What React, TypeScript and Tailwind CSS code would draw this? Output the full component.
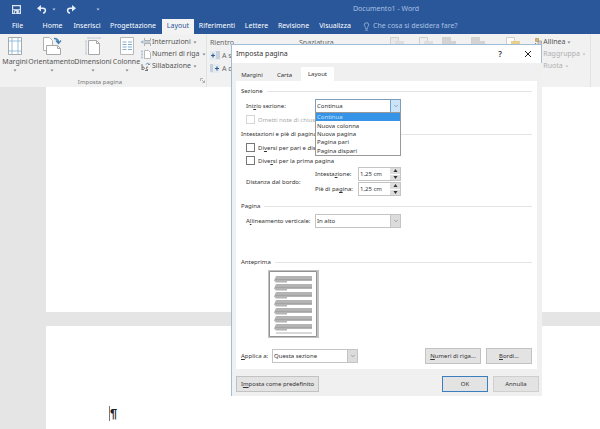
import type { ReactNode } from 'react'
import { ChevronDown, Lightbulb } from 'lucide-react'

const tabs = [
  { name: 'File', width: 'w-[35px]' },
  { name: 'Home', width: 'w-[35px]' },
  { name: 'Inserisci', width: 'w-[34px]' },
  { name: 'Progettazione', width: 'w-[58px]' },
  { name: 'Layout', width: 'w-[32px]' },
  { name: 'Riferimenti', width: 'w-[46px]' },
  { name: 'Lettere', width: 'w-[33px]' },
  { name: 'Revisione', width: 'w-[41px]' },
  { name: 'Visualizza', width: 'w-[42px]' },
]
const sectionStarts = ['Continua', 'Nuova colonna', 'Nuova pagina', 'Pagina pari', 'Pagina dispari']

function Caret() {
  return (
    <svg className="inline-block shrink-0" width="4" height="3" viewBox="0 0 4 3">
      <path d="M0.5 0.5h3L2 2.5z" fill="currentColor" opacity="0.7" />
    </svg>
  )
}

function SaveIcon() {
  return (
    <svg width="9" height="9" viewBox="0 0 9 9" fill="none">
      <path d="M0.600 0.600h7.800v7.800H0.600z" stroke="#dce6f4" strokeWidth="1.200" />
      <path d="M1 4.200h7v0.900H1z" fill="#dce6f4" />
      <path d="M2.200 5h4.600v3.500H2.200z" fill="#dce6f4" />
      <path d="M3 6.300h1.300v2H3z" fill="#2a579a" />
    </svg>
  )
}

function ArrowIcon({ flip = false }: { flip?: boolean }) {
  return (
    <svg width="10" height="9" viewBox="0 0 10 9" fill="none" className={flip ? '-scale-x-100' : ''}>
      <path d="M0 3.200L4 0v6.400z" fill="#e8eef8" />
      <path d="M3 3.200h3c3.200 0 3.200 4.500 0 4.800" stroke="#e8eef8" strokeWidth="1.500" />
    </svg>
  )
}

function MarginsIcon() {
  return (
    <svg width="16" height="18" viewBox="0 0 16 18" fill="none">
      <path d="M1.500 0.500h13v17h-13z" fill="#fff" stroke="#a8a8a8" />
      <path d="M5 1v16M11 1v16M2 4h12M2 14h12" stroke="#7fb2d6" strokeWidth="0.8" />
    </svg>
  )
}

function OrientationIcon() {
  return (
    <svg width="20" height="18" viewBox="0 0 20 18" fill="none">
      <path d="M1.500 0.500h6l3 3v10h-9z" fill="#fff" stroke="#b0b0b0" />
      <path d="M4.500 8.500h11l3 3v6h-14z" fill="#fff" stroke="#a8a8a8" />
      <path d="M15.500 8.500v3h3" stroke="#a8a8a8" />
      <path d="M12 1.500c3 0 4.500 1 4.500 4M14 3.500l2.500 3 2.500-3" stroke="#3f7fb5" strokeWidth="1.300" />
    </svg>
  )
}

function SizeIcon() {
  return (
    <svg width="16" height="18" viewBox="0 0 16 18" fill="none">
      <path d="M3.500 3.500h8l3 3v11h-11z" fill="#fff" stroke="#a8a8a8" />
      <path d="M11.500 3.500v3h3" stroke="#a8a8a8" />
      <path d="M3 1h12M3 0v2M15 0v2M1 4v13M0 4h2M0 17h2" stroke="#b5c4d0" strokeWidth="0.8" />
    </svg>
  )
}

function ColumnsIcon() {
  return (
    <svg width="16" height="18" viewBox="0 0 16 18" fill="none">
      <path d="M1.500 0.500h13v17h-13z" fill="#fff" stroke="#b8b8b8" />
      <path d="M3.500 5h4M3.500 7.500h4M3.500 10h4M3.500 12.500h4M9 5h4M9 7.500h4M9 10h4M9 12.500h4" stroke="#7faed2" />
    </svg>
  )
}

function BreaksIcon() {
  return (
    <svg width="10" height="8" viewBox="0 0 10 8" fill="none" stroke="#a0a0a0" strokeWidth="0.8" className="shrink-0">
      <path d="M3.500 0v2.500h6V0M3.500 8V5.500h6V8" />
      <path d="M0 4h9.500M2 2.500L0.500 4 2 5.500" stroke="#7b9fc0" />
    </svg>
  )
}

function LineNumbersIcon() {
  return (
    <svg width="10" height="9" viewBox="0 0 10 9" fill="none" className="shrink-0">
      <path d="M3.500 0.500h4l2 2v6h-6z" fill="#fff" stroke="#a8a8a8" strokeWidth="0.8" />
      <path d="M1 0.500v2M1 3.500v2M1 6.500v2" stroke="#7b9fc0" />
    </svg>
  )
}

function HyphenIcon() {
  return (
    <svg width="10" height="9" viewBox="0 0 10 9" fill="none" stroke="#6a6a6a" strokeWidth="0.9" className="shrink-0">
      <path d="M1 2v6M1 5.500a1.300 1.300 0 1 1 0 1.500M7 7.500a1.300 1.300 0 1 1 0-2.500M4 8.500h3" />
      <path d="M5 2.500c1-2 2.500-1.500 3 .5M7 1.500l1 1.500 1-1.500" stroke="#5a86b0" />
    </svg>
  )
}

function IndentIcon({ flip = false }: { flip?: boolean }) {
  return (
    <svg width="10" height="9" viewBox="0 0 10 9" fill="none" className="shrink-0">
      <path d="M0 0h10v9H0z" fill="#e3eaf0" />
      <path
        d={flip ? 'M0 1h3M0 3h3M0 5h3M0 7h3' : 'M6 1h4M6 3h4M6 5h4M6 7h4'}
        stroke="#a0b2c2"
        strokeWidth="0.9"
      />
      <path d={flip ? 'M5 4.500h4M7 2.500v4' : 'M1 4.500h4M3 2.500v4'} stroke="#2f5f95" strokeWidth="1.200" />
    </svg>
  )
}

function ArrangeIcon({ back, front }: { back: string; front: string }) {
  return (
    <svg width="14" height="14" viewBox="0 0 14 14" fill="none" className="shrink-0">
      <path d="M0.500 0.500h8v9h-8z" fill={back} stroke="#c8c8c8" />
      <path d="M5 4h9v9H5z" fill={front} />
    </svg>
  )
}

function AlignIcon() {
  return (
    <svg width="7" height="8" viewBox="0 0 7 8" fill="none" className="shrink-0">
      <path d="M0.500 0.500h3v3h-3z" fill="#e0b45c" stroke="#a3906a" strokeWidth="0.6" />
      <path d="M3 3h3.500v4H3z" fill="#cfcfcf" stroke="#8a8a8a" strokeWidth="0.6" />
      <path d="M0.500 5v2.500" stroke="#8a8a8a" />
    </svg>
  )
}

function BigButton({ icon, label, width }: { icon: ReactNode; label: string; width: string }) {
  return (
    <button className={`flex flex-col items-center text-[#555] ${width}`}>
      <span className="flex h-[19px] items-center">{icon}</span>
      <span className="mt-px text-[7px] leading-[12px] whitespace-nowrap">{label}</span>
      <span className="flex h-[5px] items-center"><Caret /></span>
    </button>
  )
}

function SmallButton({ icon, label, faded = false }: { icon?: ReactNode; label: string; faded?: boolean }) {
  return (
    <button className={`flex h-[12px] items-center gap-px text-[7px] whitespace-nowrap ${faded ? 'text-[#b0b0b0]' : 'text-[#555]'}`}>
      {icon}
      <span>{label}</span>
      <span className="ml-px flex"><Caret /></span>
    </button>
  )
}

function Ribbon() {
  return (
    <div className="flex h-[53px] overflow-hidden bg-[#f1f1f1]">
      <section className="flex w-[207px] shrink-0 flex-col border-r border-[#e3e3e3]">
        <div className="flex h-[40px] pt-[2px] pl-px">
          <BigButton icon={<MarginsIcon />} label="Margini" width="w-[28px]" />
          <BigButton icon={<OrientationIcon />} label="Orientamento" width="w-[45px]" />
          <BigButton icon={<SizeIcon />} label="Dimensioni" width="w-[38px]" />
          <BigButton icon={<ColumnsIcon />} label="Colonne" width="w-[29px]" />
          <div className="flex flex-col">
            <SmallButton icon={<BreaksIcon />} label="Interruzioni" />
            <SmallButton icon={<LineNumbersIcon />} label="Numeri di riga" />
            <SmallButton icon={<HyphenIcon />} label="Sillabazione" />
          </div>
        </div>
        <div className="flex flex-1 items-center text-[6px] text-[#777]">
          <span className="flex-1 pt-[3px] text-center">Imposta pagina</span>
          <svg width="5" height="5" viewBox="0 0 5 5" fill="none" stroke="#999" strokeWidth="0.7" className="mr-px">
            <path d="M0.500 3V0.500H3M2 2l2.500 2.500M4.500 2.500v2h-2" />
          </svg>
        </div>
      </section>
      <section className="flex w-[183px] shrink-0 gap-[66px] pt-[3px] pl-[3px] text-[7px] leading-[11px] whitespace-nowrap text-[#666]">
        <div className="flex w-[23px] flex-col gap-[2px]">
          <span>Rientro</span>
          <span className="flex items-center gap-[2px]"><IndentIcon />A sinistra</span>
          <span className="flex items-center gap-[2px]"><IndentIcon flip />A destra</span>
        </div>
        <span>Spaziatura</span>
      </section>
      <section className="flex min-w-0 flex-1 justify-between border-r border-[#e3e3e3]">
        <div className="flex pt-[3px] opacity-80">
          <div className="flex w-[29px]"><ArrangeIcon back="#e6e6e6" front="#dadada" /></div>
          <div className="flex w-[23px]"><ArrangeIcon back="#eeeeee" front="#dadada" /></div>
          <div className="flex w-[29px]"><ArrangeIcon back="#cccccc" front="#cccccc" /></div>
          <div className="flex w-[35px]"><ArrangeIcon back="#cccccc" front="#cccccc" /></div>
          <ArrangeIcon back="#ffffff" front="#e6c873" />
        </div>
        <div className="flex shrink-0 flex-col pt-[2px] pr-1">
          <SmallButton icon={<AlignIcon />} label="Allinea" />
          <SmallButton icon={<AlignIcon />} label="Raggruppa" faded />
          <SmallButton icon={<AlignIcon />} label="Ruota" faded />
        </div>
      </section>
      <div className="w-[9px] shrink-0" />
    </div>
  )
}

function Header() {
  return (
    <header className="bg-[#2a579a] text-white">
      <div className="flex h-[19px] items-center pl-[12px]">
        <button aria-label="Salva"><SaveIcon /></button>
        <button aria-label="Annulla" className="ml-[16px] flex items-center gap-[5px]"><ArrowIcon /><Caret /></button>
        <button aria-label="Ripeti" className="ml-[10px]"><ArrowIcon flip /></button>
        <button aria-label="Personalizza" className="ml-[20px] flex"><Caret /></button>
        <h1 className="ml-auto w-[247px] text-[7px] text-[#a9c0e2]">Documento1 - Word</h1>
      </div>
      <nav className="flex h-[15px] items-stretch text-[7px] whitespace-nowrap">
        {tabs.map((tab) => (
          <a
            key={tab.name}
            href="#"
            className={`flex items-center justify-center ${tab.width} ${tab.name === 'Layout' ? 'bg-[#f3f3f3] text-[#2b579a]' : ''}`}
          >
            {tab.name}
          </a>
        ))}
        <a href="#" className="ml-[6px] flex items-center gap-[2px] text-[#a9c0e2]"><Lightbulb size={9} />Che cosa si desidera fare?</a>
      </nav>
    </header>
  )
}

function Heading({ children }: { children: ReactNode }) {
  return (
    <h2 className="flex h-[10px] items-center gap-1 whitespace-nowrap">
      {children}
      <span className="h-px flex-1 bg-[#e4e4e4]" />
    </h2>
  )
}

function Select({ id, options, active = false }: { id: string; options: string[]; active?: boolean }) {
  return (
    <div className={`flex h-[14px] w-[86px] border bg-white ${active ? 'border-[#7f9db9]' : 'border-[#c4c4c4]'}`}>
      <select id={id} className="min-w-0 flex-1 appearance-none pl-px outline-none">
        {options.map((o) => <option key={o}>{o}</option>)}
      </select>
      <span className={`pointer-events-none flex w-[10px] items-center justify-center border-l ${active ? 'border-[#6aa5d8] bg-[#cce4f7]' : 'border-[#c4c4c4] bg-[#dcdcdc]'}`}>
        <ChevronDown size={6} color="#666" />
      </span>
    </div>
  )
}

function Check({ id, disabled = false, children }: { id: string; disabled?: boolean; children: ReactNode }) {
  return (
    <div className="flex h-[13px] items-center gap-[3px] pl-[5px] whitespace-nowrap">
      <input id={id} type="checkbox" disabled={disabled} className={`size-[9px] shrink-0 appearance-none border bg-white ${disabled ? 'border-[#d5d5d5]' : 'border-[#777]'}`} />
      <label htmlFor={id} className={disabled ? 'text-[#aaa]' : ''}>{children}</label>
    </div>
  )
}

function Spinner({ id, label }: { id: string; label: ReactNode }) {
  return (
    <div className="flex h-[14px] items-center">
      <label htmlFor={id} className="w-[43px] whitespace-nowrap">{label}</label>
      <div className="flex h-[14px] w-[43px] border border-[#c4c4c4]">
        <input id={id} type="text" defaultValue="1,25 cm" className="min-w-0 flex-1 pl-px outline-none" />
        <div className="flex w-[10px] flex-col bg-[#dedede]">
          <button aria-label="Aumenta" className="flex flex-1 items-center justify-center border-b border-white">
            <svg width="5" height="3" viewBox="0 0 5 3"><path d="M0.500 3L2.500 0 4.500 3z" fill="#333" /></svg>
          </button>
          <button aria-label="Riduci" className="flex flex-1 items-center justify-center">
            <svg width="5" height="3" viewBox="0 0 5 3"><path d="M0.500 0h4L2.500 3z" fill="#333" /></svg>
          </button>
        </div>
      </div>
    </div>
  )
}

function DialogButton({ className, children }: { className: string; children: ReactNode }) {
  return <button className={`h-[16px] border bg-[#e3e3e3] whitespace-nowrap ${className}`}>{children}</button>
}

function Preview() {
  const rows = [0, 1, 2, 3, 4, 5, 6]
  return (
    <svg width="51" height="68" viewBox="0 0 51 68" fill="none">
      <path d="M0 0h51v68H0z" fill="#c2c2c2" />
      <path d="M1.500 1.500h47v65h-47z" fill="#fff" stroke="#929292" />
      {rows.map((r) => (
        <g key={r} transform={`translate(0 ${r * 8})`}>
          <path d="M8 6h36v5H19v1.500H8L6 10.500z" fill="#b4b4b4" />
          <path d="M7 9.500h37" stroke="#a0a0a0" strokeWidth="0.8" />
        </g>
      ))}
      <path d="M8 63h36" stroke="#b2b2b2" />
    </svg>
  )
}

function PageSetupDialog() {
  return (
    <div role="dialog" aria-label="Imposta pagina" className="absolute top-[44px] left-[231px] w-[311px] border-t border-l border-[#9fbdd6] bg-[#f0f0f0] text-[6px] leading-[8px] text-[#333]">
      <div className="flex h-[18px] items-center border-r border-[#9fbdd6] bg-white pr-[9px] pl-1">
        <span className="text-[7px]">Imposta pagina</span>
        <button aria-label="Guida" className="ml-auto w-[8px] text-[8px] font-semibold">?</button>
        <button aria-label="Chiudi" className="ml-[20px]">
          <svg width="8" height="8" viewBox="0 0 8 8" stroke="#222"><path d="M1 1l6 6M7 1L1 7" /></svg>
        </button>
      </div>
      <div className="pr-[5px] pb-1 pl-1">
        <div className="flex h-[18px] items-end" role="tablist">
          <button role="tab" className="h-[13px] w-[32px]">Margini</button>
          <button role="tab" className="h-[13px] w-[33px]">Carta</button>
          <button role="tab" aria-selected="true" className="h-[14px] w-[33px] bg-white">Layout</button>
        </div>
        <div className="bg-white px-[5px] py-[5px]">
          <Heading>Sezione</Heading>
          <div className="relative mt-[3px] flex items-center pl-[5px]">
            <label htmlFor="start" className="w-[69px]">Ini<u>z</u>io sezione:</label>
            <Select id="start" options={sectionStarts} active />
            <ul className="absolute top-[13px] left-[74px] z-10 grid h-[44px] w-[86px] grid-rows-5 border border-[#999] bg-white">
              {sectionStarts.map((s, i) => (
                <li key={s} className={`flex items-center pl-px ${i === 0 ? 'bg-[#3594e8] text-[#c8e2fa]' : ''}`}>{s}</li>
              ))}
            </ul>
          </div>
          <Check id="endnotes" disabled>Ometti note di chiusura</Check>
          <div className="mt-[3px] mb-[2px]"><Heading>Intestazioni e piè di pagina</Heading></div>
          <Check id="oddeven">Di<u>v</u>ersi per pari e dispari</Check>
          <Check id="first">Dive<u>r</u>si per la prima pagina</Check>
          <div className="flex items-center pl-[5px]">
            <span className="w-[69px]">Distanza dal bordo:</span>
            <div className="flex flex-col gap-px">
              <Spinner id="top" label={<>Intesta<u>z</u>ione:</>} />
              <Spinner id="bottom" label={<>Piè di pa<u>g</u>ina:</>} />
            </div>
          </div>
          <div className="mt-[5px]"><Heading>Pagina</Heading></div>
          <div className="mt-[3px] flex items-center pl-[5px]">
            <label htmlFor="valign" className="w-[69px] whitespace-nowrap">A<u>l</u>lineamento verticale:</label>
            <Select id="valign" options={['In alto', 'Centrato', 'In basso']} />
          </div>
          <div className="mt-[29px]"><Heading>Anteprima</Heading></div>
          <div className="mt-[3px] pl-[27px]"><Preview /></div>
          <div className="mt-[10px] flex items-center">
            <label htmlFor="apply" className="w-[31px]"><u>A</u>pplica a:</label>
            <Select id="apply" options={['Questa sezione', 'Intero documento']} />
            <DialogButton className="ml-auto w-[56px] border-[#c2c2c2]"><u>N</u>umeri di riga...</DialogButton>
            <DialogButton className="ml-[5px] w-[46px] border-[#c2c2c2]"><u>B</u>ordi...</DialogButton>
          </div>
        </div>
        <div className="-mr-[2px] flex pt-[7px]">
          <DialogButton className="w-[83px] border-[#c2c2c2]">I<u>m</u>posta come predefinito</DialogButton>
          <DialogButton className="ml-auto w-[46px] border-[#3b7ebf]">OK</DialogButton>
          <DialogButton className="ml-[5px] w-[46px] border-[#cfcfcf]">Annulla</DialogButton>
        </div>
      </div>
    </div>
  )
}

export default function App() {
  return (
    <div className="relative flex min-h-screen flex-col overflow-hidden bg-[#e5e5e5] font-['Noto_Sans',sans-serif]">
      <Header />
      <Ribbon />
      <main className="flex flex-1 flex-col gap-[14px] pl-[46px]">
        <div className="h-[225px] bg-white" />
        <div className="flex-1 bg-white pt-[80px] pl-[63px]">
          <p className="flex h-[15px] items-center border-l border-[#777] font-['Liberation_Sans',sans-serif] text-[13px] font-bold text-[#222]">¶</p>
        </div>
      </main>
      <PageSetupDialog />
    </div>
  )
}
